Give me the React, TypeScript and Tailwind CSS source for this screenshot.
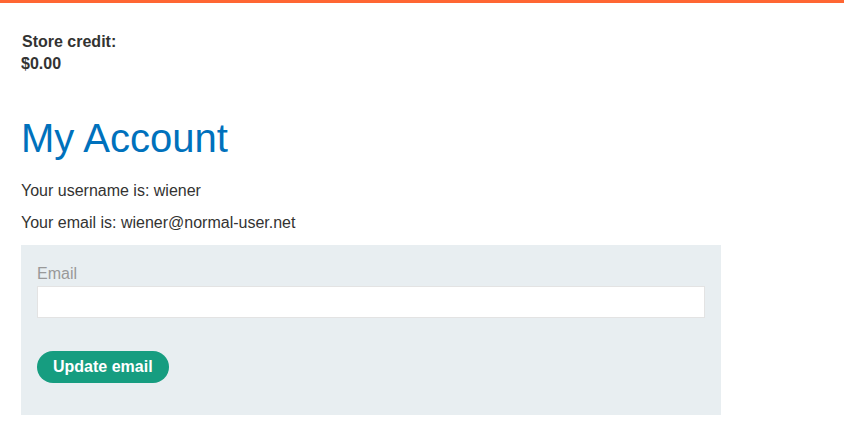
export default function App() {
  return (
    <div className="min-h-screen bg-white font-['Liberation_Sans',Arial,sans-serif] text-[#333332]">
      <div className="h-[3px] bg-[#ff6633]" />
      <div className="pl-[21px]">
        <div className="mt-[28px] text-base font-bold leading-[22px]">
          <p className="pl-px">Store credit:</p>
          <p>$0.00</p>
        </div>
        <h1 className="mt-[39px] text-[40px] leading-[48px] text-[#0071bc]">My Account</h1>
        <p className="mt-[17px] text-base leading-6">Your username is: wiener</p>
        <p className="mt-2 text-base leading-6">Your email is: wiener@normal-user.net</p>
        <form className="mt-[10px] w-[700px] bg-[#e8eef1] px-4 pt-[17px] pb-[32px]">
          <label className="block text-base leading-6 text-[#999]">Email</label>
          <input
            name="email"
            type="email"
            className="block h-8 w-full border border-[#e3e3e3] bg-white px-2 outline-none"
          />
          <button
            type="submit"
            className="mt-[33px] h-8 rounded-full bg-[#169d80] px-4 text-base font-bold text-white"
          >
            Update email
          </button>
        </form>
      </div>
    </div>
  );
}
